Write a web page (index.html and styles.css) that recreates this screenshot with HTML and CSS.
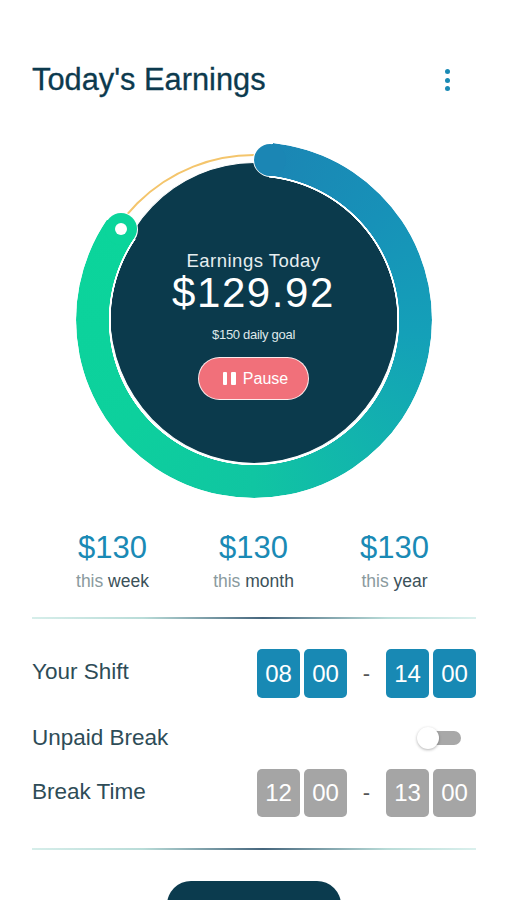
FILE: index.html
```html
<!DOCTYPE html>
<html lang="en">
<head>
    <meta charset="UTF-8">
    <meta name="viewport" content="width=device-width, initial-scale=1.0">
    <link rel="stylesheet" href="styles.css">
    <title>Today's Earnings</title>
</head>
<body>
    <div id="app">
        <header class="top-bar">
            <h1>Today's Earnings</h1>
            <button class="kebab" aria-label="More options">
                <span></span><span></span><span></span>
            </button>
        </header>

        <div class="dial">
            <div class="disc">
                <div class="disc-title">Earnings Today</div>
                <div class="disc-amount">$129.92</div>
                <div class="disc-goal">$150 daily goal</div>
                <button class="pause-btn">
                    <span class="pause-icon"><i></i><i></i></span>
                    Pause
                </button>
            </div>
            <div class="goal-track"></div>
            <div class="ring-edge"></div>
            <div class="halo halo-start"></div>
            <div class="halo halo-end"></div>
            <div class="ring"></div>
            <div class="cap cap-start"></div>
            <div class="cap cap-end"></div>
            <div class="knob-dot"></div>
        </div>

        <div class="stats">
            <div class="stat">
                <div class="stat-value">$130</div>
                <div class="stat-label"><span class="muted">this</span> week</div>
            </div>
            <div class="stat">
                <div class="stat-value">$130</div>
                <div class="stat-label"><span class="muted">this</span> month</div>
            </div>
            <div class="stat">
                <div class="stat-value">$130</div>
                <div class="stat-label"><span class="muted">this</span> year</div>
            </div>
        </div>

        <div class="divider"></div>

        <div class="settings">
            <div class="setting-row shift-row">
                <span class="setting-label">Your Shift</span>
                <div class="time-range">
                    <span class="time-box">08</span>
                    <span class="time-box">00</span>
                    <span class="dash">-</span>
                    <span class="time-box">14</span>
                    <span class="time-box">00</span>
                </div>
            </div>
            <div class="setting-row toggle-row">
                <span class="setting-label">Unpaid Break</span>
                <span class="toggle"><span class="toggle-knob"></span></span>
            </div>
            <div class="setting-row break-row">
                <span class="setting-label">Break Time</span>
                <div class="time-range off">
                    <span class="time-box">12</span>
                    <span class="time-box">00</span>
                    <span class="dash">-</span>
                    <span class="time-box">13</span>
                    <span class="time-box">00</span>
                </div>
            </div>
        </div>

        <div class="divider divider-bottom"></div>

        <div class="bottom">
            <button class="main-btn"><span class="main-icon">$$</span></button>
        </div>
    </div>
</body>
</html>
```

FILE: styles.css
```css
body {
    margin: 0;
    padding: 0;
    background-color: #ffffff;
    font-family: "Liberation Sans", Arial, sans-serif;
    overflow: hidden;
}

#app {
    width: 507px;
    height: 900px;
    overflow: hidden;
}

.top-bar {
    margin-top: 62px;
    padding: 0 57px 0 32px;
    display: flex;
    justify-content: space-between;
    align-items: center;
}

h1 {
    margin: 0;
    font-size: 30.8px;
    line-height: 36px;
    font-weight: 400;
    color: #0c3a4e;
    -webkit-text-stroke: 0.3px #0c3a4e;
}

.kebab {
    border: none;
    background: none;
    padding: 0;
    display: flex;
    flex-direction: column;
    gap: 3.3px;
}

.kebab span {
    width: 5px;
    height: 5px;
    border-radius: 50%;
    background-color: #1a8ab5;
}

/* dial */

.dial {
    position: relative;
    width: 356px;
    height: 356px;
    margin: 44px auto 0;
}

.disc {
    position: absolute;
    left: 33px;
    top: 20px;
    width: 290px;
    height: 302px;
    box-sizing: border-box;
    border: 1.5px solid #ffffff;
    border-radius: 50%;
    background-color: #0b3a4c;
    display: flex;
    flex-direction: column;
    align-items: center;
    padding-top: 86.5px;
    color: #ffffff;
}

.disc-title {
    font-size: 18.5px;
    line-height: 22px;
    letter-spacing: 0.5px;
    color: #e6eef0;
}

.disc-amount {
    margin-top: 3px;
    font-size: 42px;
    line-height: 36px;
    letter-spacing: 1.6px;
}

.disc-goal {
    margin-top: 16.5px;
    font-size: 13px;
    line-height: 16px;
    letter-spacing: -0.3px;
    color: #dfe8ea;
}

.pause-btn {
    margin-top: 14px;
    width: 111px;
    height: 43px;
    box-sizing: border-box;
    border: 1.5px solid rgba(255, 255, 255, 0.85);
    border-radius: 22px;
    background-color: #f1707a;
    color: #ffffff;
    font-family: "Liberation Sans", Arial, sans-serif;
    font-size: 16px;
    display: flex;
    align-items: center;
    justify-content: center;
    gap: 7px;
    padding: 0 0 0 4px;
}

.pause-icon {
    display: flex;
    gap: 4px;
}

.pause-icon i {
    width: 4.5px;
    height: 13px;
    border-radius: 1px;
    background-color: #ffffff;
}

.goal-track {
    position: absolute;
    inset: 12px;
    border: 2px solid #f4c56c;
    border-radius: 50%;
}

.ring-edge,
.ring {
    position: absolute;
    inset: 0;
    border-radius: 50%;
}

.ring-edge {
    background: conic-gradient(transparent 0deg 6deg, #ffffff 6deg 304.4deg, transparent 304.4deg);
    -webkit-mask: radial-gradient(circle closest-side, transparent 143px, #000 143.5px);
    mask: radial-gradient(circle closest-side, transparent 143px, #000 143.5px);
}

.ring {
    background: conic-gradient(transparent 0deg 6deg, #1b86b4 6deg, #1791b8 50deg, #14a0b8 95deg,
        #12b4ad 140deg, #10c5a2 180deg, #0dd09d 230deg, #0bd59b 304.4deg, transparent 304.4deg);
    -webkit-mask: radial-gradient(circle closest-side, transparent 145px, #000 145.5px);
    mask: radial-gradient(circle closest-side, transparent 145px, #000 145.5px);
}

.halo,
.cap,
.knob-dot {
    position: absolute;
    border-radius: 50%;
}

.halo {
    width: 35px;
    height: 35px;
    background-color: #ffffff;
}

.halo-start {
    left: 177.3px;
    top: 0.4px;
}

.halo-end {
    left: 27.7px;
    top: 69.5px;
}

.cap {
    width: 32px;
    height: 32px;
}

.cap-start {
    left: 178.8px;
    top: 1.9px;
    background-color: #1b86b4;
}

.cap-end {
    left: 29.2px;
    top: 71px;
    background-color: #0bd59b;
}

.knob-dot {
    left: 39.2px;
    top: 81px;
    width: 12px;
    height: 12px;
    background-color: #ffffff;
}

/* stats */

.stats {
    margin-top: 31.5px;
    display: grid;
    grid-template-columns: repeat(3, 141px);
    justify-content: center;
    text-align: center;
}

.stat-value {
    font-size: 31px;
    line-height: 36px;
    color: #1a8ab5;
}

.stat-label {
    margin-top: 4.5px;
    font-size: 17.5px;
    line-height: 22px;
    color: #3b5159;
}

.stat-label .muted {
    color: #8a9a9e;
}

.divider {
    margin: 25px 31px 0 32px;
    height: 2px;
    background: linear-gradient(90deg, #d6eeea 0%, #b9dcd8 25%, #46667d 52%, #b9dcd8 80%, #daf0ed 100%);
}

.divider-bottom {
    margin-top: 31px;
}

/* settings */

.settings {
    padding: 0 31px 0 32px;
}

.setting-row {
    display: flex;
    justify-content: space-between;
    align-items: center;
}

.shift-row {
    margin-top: 30px;
    height: 49px;
}

.toggle-row {
    margin-top: 20px;
    height: 40px;
}

.break-row {
    margin-top: 11px;
    height: 48px;
}

.setting-label {
    font-size: 22.5px;
    color: #2e4c57;
}

.shift-row .setting-label {
    margin-top: -4px;
}

.break-row .setting-label {
    margin-top: -2px;
}

.time-range {
    display: flex;
    align-items: stretch;
    height: 100%;
}

.time-box {
    width: 43px;
    margin-right: 4px;
    border-radius: 5px;
    background-color: #1889b4;
    color: #ffffff;
    font-size: 24px;
    display: flex;
    align-items: center;
    justify-content: center;
}

.time-box:last-child {
    margin-right: 0;
}

.time-range.off .time-box {
    background-color: #a5a5a5;
}

.dash {
    width: 31px;
    margin-right: 4px;
    display: flex;
    align-items: center;
    justify-content: center;
    font-size: 22px;
    color: #555555;
}

.toggle {
    position: relative;
    width: 34px;
    height: 14px;
    margin-right: 15px;
    border-radius: 7px;
    background-color: #a8a8a8;
}

.toggle-knob {
    position: absolute;
    left: -10px;
    top: -4px;
    width: 22px;
    height: 22px;
    border-radius: 50%;
    background-color: #ffffff;
    box-shadow: 0 1px 3px rgba(0, 0, 0, 0.3);
}

/* bottom button */

.bottom {
    display: flex;
    justify-content: center;
    margin-top: 31px;
}

.main-btn {
    width: 174px;
    height: 58px;
    border: none;
    border-radius: 24px;
    background-color: #0b3b4e;
    font-family: "Liberation Sans", Arial, sans-serif;
    font-size: 16px;
    line-height: 16px;
    text-align: left;
    padding: 12px 0 0 28px;
    display: block;
}

.main-icon {
    color: #cfd58a;
}
```
